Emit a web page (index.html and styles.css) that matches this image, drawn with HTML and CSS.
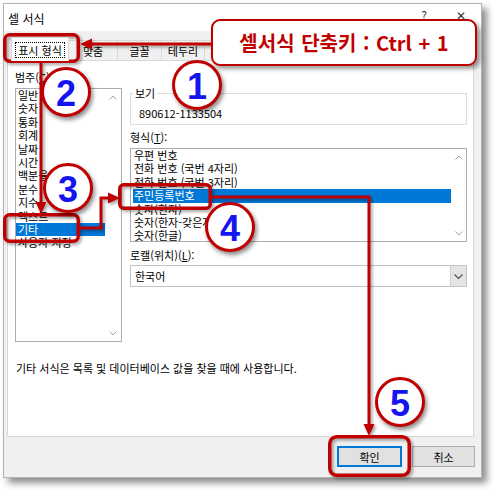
FILE: index.html
```html
<!DOCTYPE html>
<html lang="ko">
<head>
<meta charset="utf-8">
<title>셀 서식</title>
<link rel="stylesheet" href="styles.css">
</head>
<body>
<div class="stage">
  <div class="window">
    <div class="titlebar">
      <span class="title">셀 서식</span>
      <span class="tb-btns"><span class="help">?</span><span class="close">✕</span></span>
    </div>
    <div class="client">
      <div class="tabs">
        <div class="tab active"><span class="focus">표시 형식</span></div>
        <div class="tab t2">맞춤</div>
        <div class="tab t3">글꼴</div>
        <div class="tab t4">테두리</div>
        <div class="tab t5">채우기</div>
        <div class="tab t6">보호</div>
      </div>
      <div class="page">
        <div class="cols">
          <div class="left">
            <div class="label">범주(<u>C</u>):</div>
            <div class="list cat">
              <div class="items">
                <div class="item">일반</div>
                <div class="item">숫자</div>
                <div class="item">통화</div>
                <div class="item">회계</div>
                <div class="item">날짜</div>
                <div class="item">시간</div>
                <div class="item">백분율</div>
                <div class="item">분수</div>
                <div class="item">지수</div>
                <div class="item">텍스트</div>
                <div class="item sel">기타</div>
                <div class="item">사용자 지정</div>
              </div>
              <div class="sb">
                <span class="arr"><svg width="8" height="5" viewBox="0 0 8 5"><polyline points="0.5,4.5 4,1 7.5,4.5" fill="none" stroke="#a6a6a6" stroke-width="1"/></svg></span>
                <span class="arr"><svg width="8" height="5" viewBox="0 0 8 5"><polyline points="0.5,0.5 4,4 7.5,0.5" fill="none" stroke="#a6a6a6" stroke-width="1"/></svg></span>
              </div>
            </div>
          </div>
          <div class="right">
            <fieldset class="sample">
              <legend>보기</legend>
              <div class="sample-val">890612-1133504</div>
            </fieldset>
            <div class="label fmt-label">형식(<u>T</u>):</div>
            <div class="list fmt">
              <div class="items">
                <div class="item">우편 번호</div>
                <div class="item">전화 번호 (국번 4자리)</div>
                <div class="item">전화 번호 (국번 3자리)</div>
                <div class="item sel">주민등록번호</div>
                <div class="item">숫자(한자)</div>
                <div class="item">숫자(한자-갖은자)</div>
                <div class="item">숫자(한글)</div>
              </div>
              <div class="sb">
                <span class="arr"><svg width="8" height="5" viewBox="0 0 8 5"><polyline points="0.5,4.5 4,1 7.5,4.5" fill="none" stroke="#a6a6a6" stroke-width="1"/></svg></span>
                <span class="arr"><svg width="8" height="5" viewBox="0 0 8 5"><polyline points="0.5,0.5 4,4 7.5,0.5" fill="none" stroke="#a6a6a6" stroke-width="1"/></svg></span>
              </div>
            </div>
            <div class="label loc-label">로캘(위치)(<u>L</u>):</div>
            <div class="combo">
              <span class="combo-val">한국어</span>
              <span class="combo-btn"><svg width="9" height="5" viewBox="0 0 9 5"><polyline points="0.5,0.5 4.5,4.5 8.5,0.5" fill="none" stroke="#555" stroke-width="1.2"/></svg></span>
            </div>
          </div>
        </div>
        <div class="desc">기타 서식은 목록 및 데이터베이스 값을 찾을 때에 사용합니다.</div>
      </div>
      <div class="buttons">
        <div class="btn default">확인</div>
        <div class="btn cancel">취소</div>
      </div>
    </div>
  </div>

  <svg class="annot" width="500" height="496" viewBox="0 0 500 496">
    <g fill="none" stroke="#c00000" stroke-width="3">
      <path d="M211,44 H90"/>
      <path d="M41,63 V203"/>
      <path d="M80,228 H101 V198 H110"/>
      <path d="M212,197 H369 V425"/>
    </g>
    <g fill="#c00000">
      <polygon points="80,44 92,38.5 92,49.5"/>
      <polygon points="41,214 35.5,202 46.5,202"/>
      <polygon points="120,198 108,192.5 108,203.5"/>
      <polygon points="369,436 363.5,424 374.5,424"/>
    </g>
    <g fill="none" stroke="#c00000" stroke-width="3.5">
      <rect x="4.75" y="34.75" width="73.5" height="26.5" rx="5"/>
      <rect x="4.75" y="214.75" width="73.5" height="26.5" rx="5"/>
      <rect x="119.75" y="184.75" width="90.5" height="23.5" rx="4"/>
      <rect x="329.75" y="436.75" width="79.5" height="38.5" rx="7"/>
    </g>
  </svg>

  <div class="callout">셀서식 단축키 : Ctrl + 1</div>
  <div class="num n1">1</div>
  <div class="num n2">2</div>
  <div class="num n3">3</div>
  <div class="num n4">4</div>
  <div class="num n5">5</div>
</div>
</body>
</html>
```
FILE: styles.css
```css
* { box-sizing: border-box; }
html, body { margin: 0; padding: 0; background: #fff; }
body {
  width: 500px; height: 496px; overflow: hidden;
  font-family: "Noto Sans CJK KR", "Noto Sans", sans-serif;
  font-size: 11px; color: #000;
}
.stage { position: relative; width: 500px; height: 496px; padding: 3px 0 0 3px; }

.window {
  width: 479px; height: 475px;
  border: 1px solid #b4b4b4;
  background: #f0f0f0;
  box-shadow: 5px 5px 7px rgba(0,0,0,0.45);
  display: flex; flex-direction: column;
}
.titlebar {
  height: 27px; background: #fff;
  display: flex; align-items: flex-start;
  padding: 7px 0 0 4px;
}
.title { font-size: 12px; line-height: 16px; }
.tb-btns { margin-left: auto; display: flex; margin-top: -4px; }
.help { width: 34px; text-align: center; font-size: 12px; line-height: 16px; color: #333; }
.close { width: 40px; text-align: center; font-size: 12px; line-height: 16px; color: #333; }

.client {
  flex: 1; display: flex; flex-direction: column;
  padding: 6px 7px 0 3px;
}
.tabs { display: flex; align-items: flex-end; height: 23px; padding-left: 4px; }
.tab {
  height: 21px; margin-bottom: -1px;
  border: 1px solid #d9d9d9; border-left: none;
  background: #f0f0f0;
  display: flex; align-items: center; justify-content: center;
  line-height: 14px;
}
.tab.active {
  position: relative; z-index: 1;
  height: 24px; width: 58px;
  background: #fff; border-left: 1px solid #d9d9d9; border-bottom: none;
}
.focus { border: 1px dotted #000; padding: 0 2px; line-height: 14px; }
.t2 { width: 49px; }
.t3 { width: 44px; }
.t4 { width: 43px; }
.t5 { width: 48px; }
.t6 { width: 40px; }

.page {
  height: 377px; background: #fff;
  border: 1px solid #d9d9d9;
  padding: 9px 5px 0 7px;
}
.cols { display: grid; grid-template-columns: 107px 337px; column-gap: 8px; align-items: start; }
.label { line-height: 14px; height: 14px; }
.list { border: 1px solid #abadb3; display: flex; background: #fff; }
.list.cat { margin-top: 4px; height: 254px; }
.list.fmt { margin-top: 4px; height: 94px; }
.items { flex: 1; }
.cat .items { padding-left: 0; }
.fmt .items { padding-left: 2px; }
.item { line-height: 13.4px; height: 13.4px; padding-left: 2px; white-space: nowrap; }
.fmt .item { padding-left: 1px; }
.item.sel { background: #0078d7; color: #fff; }
.sb { display: flex; flex-direction: column; justify-content: space-between; }
.cat .sb { width: 16px; }
.fmt .sb { width: 15px; }
.arr { height: 16px; display: flex; align-items: center; justify-content: center; }

.sample {
  margin: 16px 0 0 0; padding: 0 8px 4px 2px;
  border: 1px solid #dcdcdc; min-width: 0;
}
.sample legend { padding: 0 2px; line-height: 14px; }
.sample-val { margin: 6px 0 0 6px; line-height: 14px; }
.fmt-label { margin-top: 5px; }
.loc-label { margin-top: 6px; }
.combo {
  margin-top: 3px; height: 22px;
  border: 1px solid #c2c2c2; background: #fff;
  display: flex; align-items: stretch;
}
.combo-val { flex: 1; padding-left: 4px; line-height: 20px; }
.combo-btn {
  width: 16px; background: #e5e5e5; border-left: 1px solid #d0d0d0;
  display: flex; align-items: center; justify-content: center;
}

.desc { margin: 19px 0 0 1px; line-height: 14px; white-space: nowrap; }

.buttons {
  display: flex; justify-content: flex-end; gap: 10px;
  padding-top: 9px; margin-right: -1px;
}
.btn {
  height: 21px; background: #e1e1e1; border: 1px solid #adadad;
  display: flex; align-items: center; justify-content: center;
  line-height: 14px;
}
.btn.default { width: 65px; border-color: #0078d7; box-shadow: inset 0 0 0 1px #0078d7; }
.btn.cancel { width: 63px; }

.annot { position: absolute; left: 0; top: 0; filter: drop-shadow(2px 2px 1.5px rgba(0,0,0,0.35)); }

.callout {
  position: absolute; left: 211px; top: 19px; width: 266px; height: 47px;
  border: 2px solid #c00000; border-radius: 9px; background: #fff;
  box-shadow: 3px 3px 4px rgba(0,0,0,0.4);
  display: flex; align-items: center; justify-content: center;
  color: #c00000; font-weight: 700; font-size: 20px;
  font-family: "Noto Sans CJK KR", "Liberation Sans", sans-serif;
  white-space: nowrap; word-spacing: 1px;
}
.num {
  position: absolute; width: 50px; height: 50px; border-radius: 50%;
  border: 3.5px solid #c00000; background: #fff;
  box-shadow: 2px 3px 4px rgba(0,0,0,0.45);
  display: flex; align-items: center; justify-content: center;
  font-family: "Liberation Sans", Arial, sans-serif; font-weight: 700;
  font-size: 36px; line-height: 1; color: #1414f0; padding-top: 3px;
}
.n1 { left: 172px; top: 60px; }
.n2 { left: 41px; top: 67px; }
.n3 { left: 43px; top: 163px; }
.n4 { left: 205px; top: 202px; }
.n5 { left: 375px; top: 377px; }
```
